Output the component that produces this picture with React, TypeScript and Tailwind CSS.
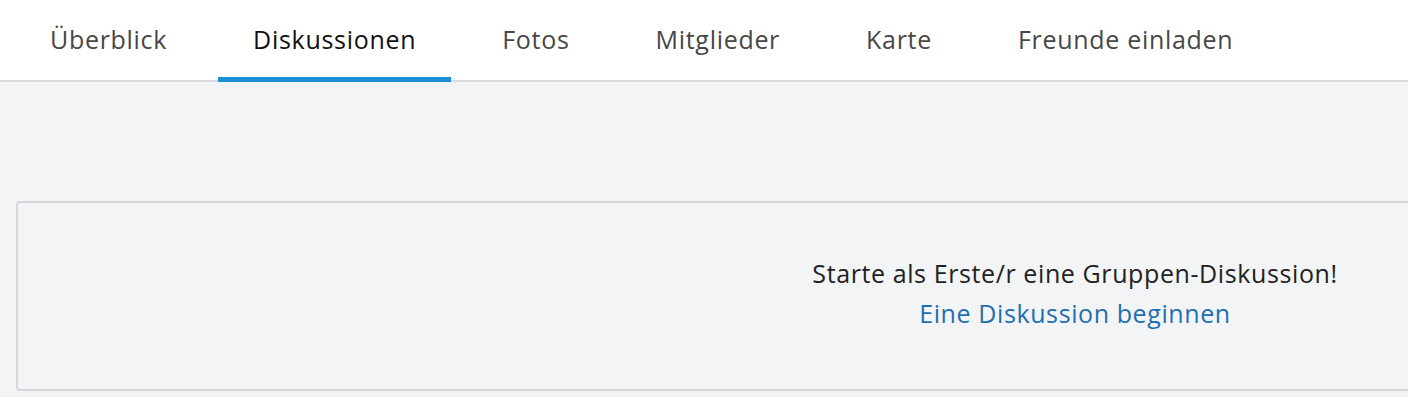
import { useState } from "react";

const tabs = ["Überblick", "Diskussionen", "Fotos", "Mitglieder", "Karte", "Freunde einladen"];

export default function App() {
  const [active, setActive] = useState(1);

  return (
    <div
      className="h-[397px] w-[1408px] overflow-hidden bg-[#f3f4f6]"
      style={{ fontFamily: "'Open Sans', Lato, sans-serif" }}
    >
      <nav className="flex h-[82px] items-stretch gap-4 border-b-2 border-[#dadbdd] bg-white pl-[15px]">
        {tabs.map((t, i) => (
          <button
            key={t}
            onClick={() => setActive(i)}
            className={
              i === active
                ? "-mb-[2px] flex items-center border-b-[5px] border-[#1b8fd6] px-[35px] pt-[3px] text-[25px] tracking-[0.7px] text-[#111]"
                : "-mb-[2px] flex items-center border-b-[5px] border-transparent px-[35px] pt-[3px] text-[25px] tracking-[0.7px] text-[#474747]"
            }
          >
            {t}
          </button>
        ))}
      </nav>

      <div className="pl-4 pt-[119px]">
        <div className="flex h-[190px] w-[2118px] flex-col items-center justify-center rounded border-2 border-[#d3d7db] pb-[6px]">
          <p className="text-[25px] leading-[40px] tracking-[0.6px] text-[#222]">Starte als Erste/r eine Gruppen-Diskussion!</p>
          <a href="#" className="text-[25px] leading-[40px] tracking-[0.6px] text-[#1f6fb0]">
            Eine Diskussion beginnen
          </a>
        </div>
      </div>
    </div>
  );
}
